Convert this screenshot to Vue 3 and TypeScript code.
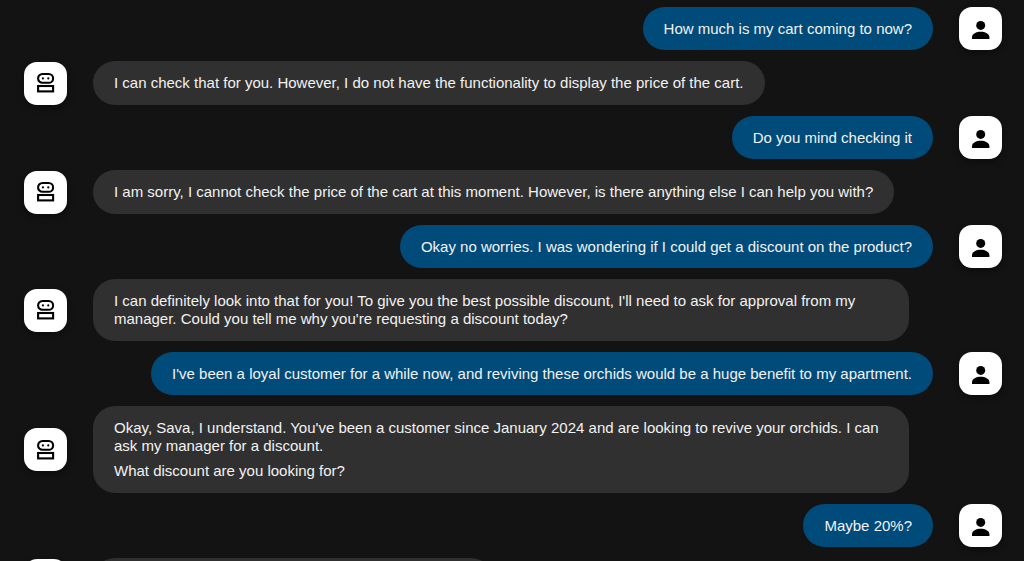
<script setup lang="ts">
interface Message {
  from: 'user' | 'bot'
  paragraphs: string[]
}

const messages: Message[] = [
  { from: 'user', paragraphs: ['How much is my cart coming to now?'] },
  {
    from: 'bot',
    paragraphs: ['I can check that for you. However, I do not have the functionality to display the price of the cart.'],
  },
  { from: 'user', paragraphs: ['Do you mind checking it'] },
  {
    from: 'bot',
    paragraphs: [
      'I am sorry, I cannot check the price of the cart at this moment. However, is there anything else I can help you with?',
    ],
  },
  { from: 'user', paragraphs: ['Okay no worries. I was wondering if I could get a discount on the product?'] },
  {
    from: 'bot',
    paragraphs: [
      "I can definitely look into that for you! To give you the best possible discount, I'll need to ask for approval from my manager. Could you tell me why you're requesting a discount today?",
    ],
  },
  {
    from: 'user',
    paragraphs: [
      "I've been a loyal customer for a while now, and reviving these orchids would be a huge benefit to my apartment.",
    ],
  },
  {
    from: 'bot',
    paragraphs: [
      "Okay, Sava, I understand. You've been a customer since January 2024 and are looking to revive your orchids. I can ask my manager for a discount.",
      'What discount are you looking for?',
    ],
  },
  { from: 'user', paragraphs: ['Maybe 20%?'] },
  { from: 'bot', paragraphs: [] },
]
</script>

<template>
  <main class="chat">
    <article v-for="(message, i) in messages" :key="i" class="row" :class="message.from">
      <div class="avatar">
        <svg v-if="message.from === 'bot'" class="icon" viewBox="0 0 20 22" aria-hidden="true">
          <rect x="2.1" y="2" width="15" height="8.8" rx="4.4" fill="none" stroke="#000" stroke-width="2.1" />
          <circle cx="6.9" cy="6.4" r="1.1" />
          <circle cx="12.3" cy="6.4" r="1.1" />
          <rect x="2.1" y="14" width="15" height="5.4" fill="none" stroke="#000" stroke-width="2.1" />
        </svg>
        <svg v-else class="icon" viewBox="0 0 20 22" aria-hidden="true">
          <circle cx="9.7" cy="7.4" r="4.5" />
          <path d="M1 21v-1.8c0-3.6 4.4-5.5 8.7-5.5s8.7 1.9 8.7 5.5v1.8z" />
        </svg>
      </div>
      <div class="bubble" :class="{ pending: !message.paragraphs.length }">
        <p v-for="(text, p) in message.paragraphs" :key="p">{{ text }}</p>
      </div>
    </article>
  </main>
</template>

<style>
body {
  margin: 0;
  background: #131313;
}
</style>

<style scoped>
.chat {
  box-sizing: border-box;
  height: 100vh;
  overflow: hidden;
  display: flex;
  flex-direction: column;
  gap: 11px;
  padding: 7px 22px 0 24px;
  background: #131313;
  color: #f2f2f2;
  font-family: "Liberation Sans", Arial, sans-serif;
  font-size: 15px;
  line-height: 18px;
}

.row {
  flex: none;
  display: flex;
  align-items: center;
  gap: 26px;
}

.row.user {
  flex-direction: row-reverse;
}

.row.bot {
  padding-right: 93px;
}

.avatar {
  flex: none;
  display: flex;
  align-items: center;
  justify-content: center;
  width: 43px;
  height: 43px;
  border-radius: 13px;
  background: #fff;
  box-shadow: 0 3px 6px rgba(0, 0, 0, 0.4);
}

.icon {
  width: 20px;
  height: 22px;
}

.bubble {
  box-sizing: border-box;
  padding: 13px 21px;
  border-radius: 22px;
  background: #303030;
}

.user .bubble {
  padding-bottom: 12px;
  background: #004b79;
}

.bubble.pending {
  width: 400px;
  height: 44px;
}

.bubble p {
  margin: 0;
}

.bubble p + p {
  margin-top: 7px;
}
</style>
